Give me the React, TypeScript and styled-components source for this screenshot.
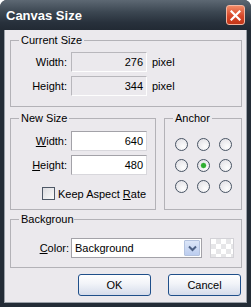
import React from 'react'
import styled, { createGlobalStyle } from 'styled-components'

const GlobalStyle = createGlobalStyle`
  html, body {
    margin: 0;
    padding: 0;
    background: #ffffff;
  }
  body {
    font-family: "Liberation Sans", Arial, sans-serif;
    font-size: 11px;
    color: #000;
  }
`

export default function App() {
  const anchors = [0, 1, 2, 3, 4, 5, 6, 7, 8]

  return (
    <>
      <GlobalStyle />
      <Window>
        <TitleBar>
          <Title>Canvas Size</Title>
          <CloseButton aria-label='Close'>
            <svg width='11' height='11' viewBox='0 0 11 11'>
              <path d='M1.5 1.5 L9.5 9.5 M9.5 1.5 L1.5 9.5' stroke='#fff' strokeWidth='2.2' strokeLinecap='square' />
            </svg>
          </CloseButton>
        </TitleBar>

        <Body>
          <Group>
            <Legend>Current Size</Legend>
            <FieldGrid $top={5} $bottom={10}>
              <FieldLabel>Width:</FieldLabel>
              <NumberBox $disabled>276</NumberBox>
              <Unit>pixel</Unit>
              <FieldLabel>Height:</FieldLabel>
              <NumberBox $disabled>344</NumberBox>
              <Unit>pixel</Unit>
            </FieldGrid>
          </Group>

          <MiddleRow>
            <NewSizeGroup>
              <Legend>New Size</Legend>
              <FieldGrid $top={6} $bottom={0}>
                <FieldLabel><u>W</u>idth:</FieldLabel>
                <NumberBox>640</NumberBox>
                <span />
                <FieldLabel><u>H</u>eight:</FieldLabel>
                <NumberBox>480</NumberBox>
                <span />
              </FieldGrid>
              <CheckRow>
                <CheckBox />
                <span>Keep Aspect <u>R</u>ate</span>
              </CheckRow>
            </NewSizeGroup>

            <AnchorGroup>
              <Legend>Anchor</Legend>
              <RadioGrid>
                {anchors.map(i => (
                  <Radio key={i} $checked={i === 4} />
                ))}
              </RadioGrid>
            </AnchorGroup>
          </MiddleRow>

          <BackgroundGroup>
            <Legend $trim>Backgroun</Legend>
            <ColorRow>
              <ColorLabel><u>C</u>olor:</ColorLabel>
              <Select>
                <SelectText>Background</SelectText>
                <DropButton>
                  <svg width='9' height='7' viewBox='0 0 9 7'>
                    <path d='M1 1.5 L4.5 5 L8 1.5' fill='none' stroke='#4d6185' strokeWidth='2' />
                  </svg>
                </DropButton>
              </Select>
              <Swatch />
            </ColorRow>
          </BackgroundGroup>

          <ButtonRow>
            <DialogButton>OK</DialogButton>
            <DialogButton>Cancel</DialogButton>
          </ButtonRow>
        </Body>
      </Window>
    </>
  )
}

const Window = styled.div`
  width: 251px;
  height: 307px;
  display: flex;
  flex-direction: column;
  border-radius: 7px 7px 0 0;
  overflow: hidden;
  background: #232c36;
`

const TitleBar = styled.div`
  height: 30px;
  flex: none;
  display: flex;
  align-items: center;
  justify-content: space-between;
  padding: 0 6px 0 6px;
  background: linear-gradient(#5d6873 0%, #3c4752 40%, #28313c 75%, #222a34 100%);
`

const Title = styled.span`
  color: #ffffff;
  font-weight: bold;
  font-size: 13px;
  margin-top: 1px;
`

const CloseButton = styled.button`
  width: 19px;
  height: 20px;
  padding: 0;
  display: flex;
  align-items: center;
  justify-content: center;
  border: 1px solid #f3b5a0;
  border-radius: 3px;
  background: linear-gradient(#f08a66, #d8482a 55%, #c23618);
`

const Body = styled.div`
  flex: 1;
  margin: 0 4px 4px 4px;
  padding: 4px 5px 0 6px;
  background: #ebe9ed;
  box-shadow: inset 1px 0 0 #9aa0a8, inset -1px 0 0 #9aa0a8, inset 0 -1px 0 #9aa0a8;
  display: flex;
  flex-direction: column;
`

const Group = styled.fieldset`
  margin: 0;
  padding: 0;
  min-width: 0;
  border: 1px solid #b3b2b7;
`

const Legend = styled.legend<{ $trim?: boolean }>`
  margin-left: 8px;
  padding: ${p => (p.$trim ? '0 0 0 2px' : '0 2px')};
  line-height: 13px;
  font-size: 11px;
`

const FieldGrid = styled.div<{ $top: number; $bottom: number }>`
  display: grid;
  grid-template-columns: 56px 76px auto;
  column-gap: 4px;
  row-gap: 4px;
  align-items: center;
  padding: ${p => p.$top}px 0 ${p => p.$bottom}px 0;
`

const FieldLabel = styled.span`
  text-align: right;
`

const NumberBox = styled.div<{ $disabled?: boolean }>`
  height: 20px;
  box-sizing: border-box;
  padding: 0 3px;
  display: flex;
  align-items: center;
  justify-content: flex-end;
  background: ${p => (p.$disabled ? '#ebe9ed' : '#ffffff')};
  border: 1px solid;
  border-color: ${p => (p.$disabled ? '#b8b7bc #fdfdfd #fdfdfd #b8b7bc' : '#a3a2a8 #d8d7dc #d8d7dc #a3a2a8')};
`

const Unit = styled.span`
  margin-left: 1px;
`

const MiddleRow = styled.div`
  display: flex;
  gap: 8px;
  margin-top: 5px;
`

const NewSizeGroup = styled(Group)`
  width: 146px;
  box-sizing: border-box;
  padding-bottom: 9px;
`

const CheckRow = styled.label`
  display: flex;
  align-items: center;
  gap: 3px;
  margin-top: 12px;
  padding-left: 31px;
  height: 13px;
`

const CheckBox = styled.span`
  width: 13px;
  height: 13px;
  box-sizing: border-box;
  border: 1px solid #4e5866;
  background: linear-gradient(135deg, #dcdce0, #fafafa);
`

const AnchorGroup = styled(Group)`
  width: 78px;
  box-sizing: border-box;
`

const RadioGrid = styled.div`
  display: grid;
  grid-template-columns: repeat(3, 13px);
  column-gap: 9px;
  row-gap: 8px;
  padding: 13px 0 0 10px;
`

const Radio = styled.span<{ $checked?: boolean }>`
  width: 13px;
  height: 13px;
  box-sizing: border-box;
  border-radius: 50%;
  border: 1px solid #485464;
  background: ${p =>
    p.$checked
      ? 'radial-gradient(circle at 50% 50%, #2fae2f 0, #2fae2f 2px, #7acb7a 2.6px, transparent 3.2px), radial-gradient(circle at 65% 70%, #fdfdfd, #dedde2)'
      : 'radial-gradient(circle at 65% 70%, #fdfdfd, #dedde2)'};
`

const BackgroundGroup = styled(Group)`
  margin-top: 3px;
`

const ColorRow = styled.div`
  display: flex;
  align-items: center;
  padding: 12px 0 9px 0;
`

const ColorLabel = styled.span`
  width: 58px;
  text-align: right;
  margin-right: 2px;
`

const Select = styled.div`
  width: 131px;
  height: 20px;
  box-sizing: border-box;
  border: 1px solid #a3a2a8;
  background: #ffffff;
  display: flex;
  align-items: center;
  padding: 1px;
`

const SelectText = styled.span`
  flex: 1;
  padding-left: 2px;
`

const DropButton = styled.span`
  width: 16px;
  height: 16px;
  box-sizing: border-box;
  border: 1px solid #b4c3df;
  border-radius: 1px;
  background: linear-gradient(#dce6f8, #bccdef);
  display: flex;
  align-items: center;
  justify-content: center;
`

const Swatch = styled.span`
  width: 24px;
  height: 20px;
  margin-left: 8px;
  box-sizing: border-box;
  border: 1px solid #d2d1d6;
  background-color: #ffffff;
  background-image:
    linear-gradient(45deg, #e6e6e8 25%, transparent 25%, transparent 75%, #e6e6e8 75%),
    linear-gradient(45deg, #e6e6e8 25%, transparent 25%, transparent 75%, #e6e6e8 75%);
  background-size: 10px 10px;
  background-position: 0 0, 5px 5px;
`

const ButtonRow = styled.div`
  display: flex;
  justify-content: flex-end;
  gap: 17px;
  margin-top: 6px;
  padding-right: 1px;
`

const DialogButton = styled.button`
  width: 73px;
  height: 22px;
  padding: 0;
  font-family: "Liberation Sans", Arial, sans-serif;
  font-size: 11px;
  color: #000;
  border: 1px solid #1f4f8a;
  border-radius: 3px;
  background: linear-gradient(#ffffff, #f1f3f8 45%, #d5dceb);
`
